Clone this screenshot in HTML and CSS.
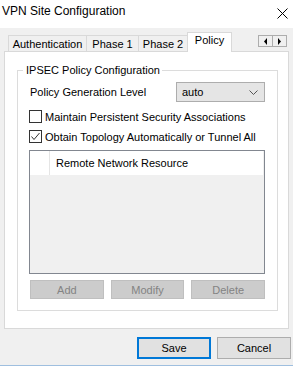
FILE: index.html
```html
<!DOCTYPE html>
<html>
<head>
<meta charset="utf-8">
<link rel="stylesheet" href="styles.css">
</head>
<body>
<div class="window">
  <div class="titlebar">
    <span class="title">VPN Site Configuration</span>
    <svg class="close" width="11" height="11" viewBox="0 0 11 11"><path d="M0.5 0.5 L10.5 10.5 M10.5 0.5 L0.5 10.5" stroke="#000" stroke-width="1" fill="none"/></svg>
  </div>
  <div class="tabstrip">
    <div class="tab t-auth">Authentication</div>
    <div class="tab t-p1">Phase 1</div>
    <div class="tab t-p2">Phase 2</div>
    <div class="tab t-pol active">Policy</div>
    <div class="scroller">
      <div class="sbtn"><svg width="4" height="7" viewBox="0 0 4 7"><path d="M3 0 L0 3.5 L3 7 Z" fill="#000"/></svg></div>
      <div class="sbtn"><svg width="4" height="7" viewBox="0 0 4 7"><path d="M0 0 L3 3.5 L0 7 Z" fill="#000"/></svg></div>
    </div>
  </div>
  <div class="panel">
    <div class="group">
      <span class="legend">IPSEC Policy Configuration</span>
      <div class="row-level">
        <span class="label">Policy Generation Level</span>
        <div class="combo">
          <span>auto</span>
          <svg width="9" height="5" viewBox="0 0 9 5"><path d="M0.5 0.5 L4.5 4.5 L8.5 0.5" stroke="#555" stroke-width="1" fill="none"/></svg>
        </div>
      </div>
      <div class="check">
        <span class="box"></span>
        <span>Maintain Persistent Security Associations</span>
      </div>
      <div class="check">
        <span class="box"><svg width="11" height="11" viewBox="0 0 11 11"><path d="M1.5 5.5 L4 8.5 L9.5 2" stroke="#333" stroke-width="1" fill="none"/></svg></span>
        <span>Obtain Topology Automatically or Tunnel All</span>
      </div>
      <div class="list">
        <div class="lhead">
          <div class="lcol0"></div>
          <div class="lcol1">Remote Network Resource</div>
        </div>
      </div>
      <div class="actions">
        <button class="btn dis">Add</button>
        <button class="btn dis">Modify</button>
        <button class="btn dis">Delete</button>
      </div>
    </div>
  </div>
  <div class="footer">
    <button class="btn main">Save</button>
    <button class="btn norm">Cancel</button>
  </div>
  <div class="edge"></div>
</div>
</body>
</html>
```

FILE: styles.css
```css
* { box-sizing: border-box; }
html, body { margin: 0; padding: 0; }
body {
  width: 293px;
  height: 366px;
  background: #f0f0f0;
  font-family: "Liberation Sans", Arial, sans-serif;
  font-size: 11px;
  color: #000;
  overflow: hidden;
  white-space: nowrap;
}
.window { width: 293px; height: 366px; display: flex; flex-direction: column; }
.titlebar {
  height: 28px;
  background: #ffffff;
  display: flex;
  align-items: flex-start;
  justify-content: space-between;
  padding: 3px 4px 0 2px;
}
.title { font-size: 12px; line-height: 16px; }
.close { margin-top: 5px; margin-right: 1px; }
.tabstrip {
  height: 23px;
  padding: 0 0 0 8px;
  display: flex;
  align-items: flex-end;
  position: relative;
  z-index: 1;
}
.tab {
  height: 16px;
  border: 1px solid #d9d9d9;
  border-bottom: none;
  background: #f0f0f0;
  line-height: 15px;
  text-align: center;
  padding-top: 1px;
}
.t-auth { width: 79px; }
.t-p1 { width: 53px; margin-left: -1px; }
.t-p2 { width: 50px; margin-left: -1px; }
.t-pol { width: 45px; margin-left: -1px; }
.tab.active {
  height: 20px;
  background: #fff;
  margin-bottom: -1px;
  padding-top: 0;
  line-height: 15px;
}
.scroller {
  margin-left: auto;
  margin-right: 6px;
  align-self: flex-start;
  margin-top: 7px;
  display: flex;
}
.sbtn {
  width: 15px;
  height: 12px;
  border: 1px solid #adadad;
  background: #f0f0f0;
  display: flex;
  align-items: center;
  justify-content: center;
}
.sbtn + .sbtn { margin-left: -1px; }
.panel {
  margin-left: 4px;
  width: 285px;
  height: 278px;
  background: #fff;
  border: 1px solid #d9d9d9;
  padding: 18px 0 0 12px;
}
.group {
  position: relative;
  width: 261px;
  height: 241px;
  border: 1px solid #dcdcdc;
  padding: 11px 12px 0 11px;
}
.legend {
  position: absolute;
  top: -8px;
  left: 5px;
  padding: 0 2px 0 3px;
  background: #fff;
  line-height: 14px;
}
.row-level {
  display: flex;
  align-items: center;
  justify-content: space-between;
  height: 20px;
}
.label { padding-left: 1px; }
.combo {
  width: 89px;
  height: 20px;
  background: #e5e5e5;
  border: 1px solid #adadad;
  display: flex;
  align-items: center;
  justify-content: space-between;
  padding: 0 6px 0 5px;
}
.check {
  display: flex;
  align-items: center;
  height: 13px;
  margin-top: 8px;
}
.check + .check { margin-top: 7px; }
.box {
  width: 13px;
  height: 13px;
  border: 1px solid #333;
  background: #fff;
  margin-right: 3px;
  display: flex;
  align-items: center;
  justify-content: center;
  flex: none;
}
.list {
  margin-top: 7px;
  width: 236px;
  height: 124px;
  border: 1px solid #828790;
  background: #f0f0f0;
}
.lhead {
  display: flex;
  width: 233px;
  height: 24px;
  background: #fff;
}
.lcol0 { width: 20px; border-right: 1px solid #e5e5e5; }
.lcol1 { padding-left: 6px; line-height: 24px; }
.actions {
  display: flex;
  gap: 7px;
  margin-top: 6px;
  padding-left: 1px;
}
.btn {
  font-family: "Liberation Sans", Arial, sans-serif;
  font-size: 11px;
  width: 74px;
  padding: 0;
  margin: 0;
}
.btn.dis {
  height: 19px;
  background: #cccccc;
  border: 1px solid #bfbfbf;
  color: #838383;
}
.footer {
  display: flex;
  justify-content: flex-end;
  gap: 6px;
  padding-right: 2px;
  margin-top: 8px;
}
.btn.main {
  height: 22px;
  background: #e1e1e1;
  border: 2px solid #0078d7;
  color: #000;
}
.btn.norm {
  height: 22px;
  background: #e1e1e1;
  border: 1px solid #adadad;
  color: #000;
}
.edge {
  margin-top: auto;
  height: 1px;
  background: #9fbfdf;
}
```
